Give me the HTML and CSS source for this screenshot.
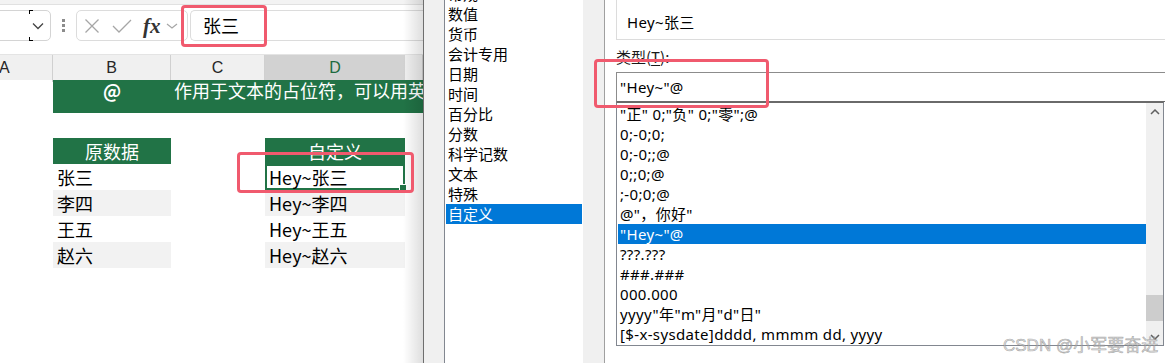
FILE: index.html
```html
<!DOCTYPE html>
<html>

<head>
    <title>设置单元格格式</title>
    <link rel="stylesheet" href="styles.css">
</head>

<body>
    <div id="screen">
        <div id="excel">
            <div class="top-strip"></div>
            <div class="formula-bar">
                <div class="name-box">
                    <span class="name-drop">
                        <svg width="12" height="8" viewBox="0 0 12 8"><path d="M1 1.5 L6 6.5 L11 1.5" fill="none" stroke="#444" stroke-width="1.3"/></svg>
                    </span>
                </div>
                <div class="grip"><i></i><i></i><i></i></div>
                <div class="fx-group">
                    <svg class="fx-icon" width="16" height="16" viewBox="0 0 16 16"><path d="M1.5 1.5 L14.5 14.5 M14.5 1.5 L1.5 14.5" stroke="#a6a6a6" stroke-width="1.3" fill="none"/></svg>
                    <svg class="fx-icon" width="20" height="14" viewBox="0 0 20 14"><path d="M1 7 L7 13 L19 1" stroke="#a6a6a6" stroke-width="1.3" fill="none"/></svg>
                    <span class="fx">fx</span>
                    <svg class="fx-drop" width="12" height="6" viewBox="0 0 12 6"><path d="M1 1 L6 5 L11 1" fill="none" stroke="#a6a6a6" stroke-width="1.2"/></svg>
                </div>
                <div class="formula-input">张三</div>
            </div>
            <div class="col-heads">
                <div class="col-head col-a">A</div>
                <div class="col-head">B</div>
                <div class="col-head">C</div>
                <div class="col-head selected">D</div>
                <div class="col-head"></div>
            </div>
            <div class="sheet">
                <div></div>
                <div class="banner"><span class="banner-at">@</span><span class="banner-text">作用于文本的占位符，可以用英文的双引号包裹内容</span></div>

                <div class="blank-row"></div>

                <div></div><div class="cell head">原数据</div><div></div><div class="cell head">自定义</div><div></div>
                <div></div><div class="cell">张三</div><div></div><div class="cell active">Hey~张三</div><div></div>
                <div></div><div class="cell band">李四</div><div></div><div class="cell band">Hey~李四</div><div></div>
                <div></div><div class="cell">王五</div><div></div><div class="cell">Hey~王五</div><div></div>
                <div></div><div class="cell band">赵六</div><div></div><div class="cell band">Hey~赵六</div><div></div>
            </div>
        </div>

        <div id="dialog">
            <div class="cat-panel">
                <ul class="cat-list">
                    <li>常规</li>
                    <li>数值</li>
                    <li>货币</li>
                    <li>会计专用</li>
                    <li>日期</li>
                    <li>时间</li>
                    <li>百分比</li>
                    <li>分数</li>
                    <li>科学记数</li>
                    <li>文本</li>
                    <li>特殊</li>
                    <li class="selected">自定义</li>
                </ul>
            </div>
            <div class="type-panel">
                <div class="sample">Hey~张三</div>
                <div class="type-label">类型(<u>T</u>):</div>
                <div class="type-input">"Hey~"@</div>
                <div class="type-list">
                    <ul class="type-items">
                        <li>"正" 0;"负" 0;"零";@</li>
                        <li>0;-0;0;</li>
                        <li>0;-0;;@</li>
                        <li>0;;0;@</li>
                        <li>;-0;0;@</li>
                        <li>@"，你好"</li>
                        <li class="selected">"Hey~"@</li>
                        <li>???.???</li>
                        <li>###.###</li>
                        <li>000.000</li>
                        <li>yyyy"年"m"月"d"日"</li>
                        <li>[$-x-sysdate]dddd, mmmm dd, yyyy</li>
                    </ul>
                    <div class="scrollbar">
                        <span class="arrow">
                            <svg width="10" height="6" viewBox="0 0 10 6"><path d="M1 5 L5 1 L9 5" fill="none" stroke="#606060" stroke-width="1.5"/></svg>
                        </span>
                        <span class="track"><span class="thumb"></span></span>
                        <span class="arrow">
                            <svg width="10" height="6" viewBox="0 0 10 6"><path d="M1 1 L5 5 L9 1" fill="none" stroke="#606060" stroke-width="1.5"/></svg>
                        </span>
                    </div>
                </div>
            </div>
        </div>

        <div class="dialog-shadow"></div>
        <div class="mark mark-formula"></div>
        <div class="mark mark-cell"></div>
        <div class="mark mark-type"></div>
        <div class="watermark">CSDN @小军要奋进</div>
    </div>
</body>

</html>
```

FILE: styles.css
```css
* {
    box-sizing: border-box;
}

html, body {
    margin: 0;
    padding: 0;
    background: #fff;
}

#screen {
    position: relative;
    display: flex;
    width: 1165px;
    height: 363px;
    overflow: hidden;
}

ul {
    list-style: none;
    margin: 0;
    padding: 0;
}

/* ---------- excel side ---------- */

#excel {
    width: 423px;
    flex: none;
    overflow: hidden;
    font-family: "Noto Sans CJK SC", sans-serif;
    color: #000;
}

.top-strip {
    height: 5px;
    background: #f3f3f3;
    border-bottom: 1px solid #e1e1e1;
}

.formula-bar {
    display: flex;
    align-items: center;
    height: 49px;
    padding-bottom: 8px;
}

.name-box {
    width: 52px;
    height: 31px;
    margin-left: -1px;
    border: 1px solid #d4d4d4;
    border-radius: 0 5px 5px 0;
    background: #fff;
    display: flex;
    justify-content: flex-end;
}

.name-drop {
    position: relative;
    width: 21px;
    display: flex;
    align-items: center;
    justify-content: center;
    padding-right: 4px;
}

.name-drop::before,
.name-drop::after {
    content: "";
    position: absolute;
    left: 0;
    width: 3px;
    height: 3px;
    border-left: 1px solid #000;
}

.name-drop::before {
    top: -1px;
    border-top: 1px solid #000;
}

.name-drop::after {
    bottom: -1px;
    border-bottom: 1px solid #000;
}

.grip {
    display: flex;
    flex-direction: column;
    gap: 2px;
    margin: 0 11px 0 11px;
}

.grip i {
    display: block;
    width: 3px;
    height: 3px;
    background: #8c8c8c;
}

.fx-group {
    display: flex;
    align-items: center;
    width: 112px;
    height: 31px;
    border: 1px solid #dcdcdc;
    border-radius: 5px;
    padding-left: 7px;
}

.fx-icon {
    margin-right: 11px;
}

.fx-icon + .fx-icon {
    margin-right: 11px;
    margin-left: 1px;
}

.fx {
    font-family: "Liberation Serif", serif;
    font-style: italic;
    font-weight: bold;
    font-size: 21px;
    line-height: 20px;
    color: #333;
    margin-right: 5px;
}

.formula-input {
    flex: 1;
    height: 31px;
    margin-left: 2px;
    border: 1px solid #dcdcdc;
    border-right: none;
    border-radius: 5px 0 0 5px;
    padding-left: 12px;
    font-size: 18px;
    line-height: 28px;
}

.col-heads {
    display: grid;
    grid-template-columns: 53px 118px 94px 140px 1fr;
    height: 26px;
    background: #f0f0f0;
    border-top: 1px solid #e4e4e4;
}

.col-head {
    border-right: 1px solid #d0d0d0;
    font-family: "Liberation Sans", sans-serif;
    font-size: 16px;
    line-height: 25px;
    text-align: center;
    color: #262626;
}

.col-head.col-a {
    text-align: left;
    text-indent: -1px;
}

.col-head.selected {
    background: #d2d2d2;
    color: #1d6b3f;
    border-bottom: 2px solid #217346;
    border-right: none;
}

.sheet {
    display: grid;
    grid-template-columns: 53px 118px 94px 140px 1fr;
    grid-template-rows: 33px 25px 26px 26px 26px 26px 26px;
    font-size: 18px;
}

.banner {
    grid-column: span 4;
    display: flex;
    background: #217346;
    color: #fff;
    line-height: 21px;
    white-space: nowrap;
    overflow: hidden;
}

.banner-at {
    width: 118px;
    flex: none;
    text-align: center;
    font-weight: 600;
}

.banner-text {
    padding-left: 3px;
}

.blank-row {
    grid-column: 1 / -1;
}

.cell {
    position: relative;
    padding-left: 4px;
    line-height: 26px;
    white-space: nowrap;
}

.cell.head {
    background: #217346;
    color: #fff;
    text-align: center;
    padding-left: 0;
}

.cell.band {
    background: #f2f2f2;
}

.sheet .cell:nth-child(5n+4) {
    padding-left: 5px;
}

.sheet .cell.head:nth-child(5n+4) {
    padding-left: 0;
}

.cell.active {
    box-shadow: inset 0 0 0 2px #217346;
}

.cell.active::after {
    content: "";
    position: absolute;
    right: -2px;
    bottom: -1px;
    width: 6px;
    height: 5px;
    background: #217346;
    border: 1px solid #fff;
}

/* ---------- dialog side ---------- */

#dialog {
    flex: 1;
    display: flex;
    border-left: 1px solid #6e6e6e;
    font-family: "Noto Sans", "Noto Sans CJK SC", sans-serif;
    font-size: 15px;
    color: #000;
}

.cat-panel {
    width: 181px;
    flex: none;
    background: #f0f0f0;
    padding-left: 20px;
    border-right: 1px solid #a0a0a0;
}

.cat-list {
    width: 139px;
    height: 400px;
    margin-top: -16px;
    background: #fff;
    border-left: 1px solid #828790;
    padding-top: 0;
}

.cat-list li {
    height: 20px;
    line-height: 20px;
    padding-left: 3px;
    font-family: "Noto Sans CJK SC", sans-serif;
}

.cat-list li.selected {
    background: #0078d7;
    color: #fff;
    margin: 0 1px;
    padding-left: 2px;
}

.type-panel {
    flex: 1;
    background: #fff;
    padding-left: 11px;
    overflow: hidden;
    letter-spacing: 0.35px;
}

.sample {
    width: 600px;
    height: 40px;
    border: 1px solid #dcdcdc;
    border-top: none;
    padding: 12px 10px 0;
    line-height: 20px;
}

.type-label {
    margin-top: 7px;
    line-height: 20px;
    font-family: "Noto Sans CJK SC", sans-serif;
    font-size: 15px;
    letter-spacing: 0;
    color: #1a1a1a;
}

.type-label u {
    text-decoration-thickness: 1px;
    text-underline-offset: 2px;
}

.type-input {
    width: 600px;
    height: 30px;
    margin-top: 5px;
    border: 1px solid #8c8c8c;
    border-bottom-color: #6a6a6a;
    padding-left: 3px;
    line-height: 28px;
}

.type-list {
    display: flex;
    width: 548px;
    height: 244px;
    border: 1px solid #828790;
    border-top-color: #6a6a6a;
    overflow: hidden;
}

.type-items {
    flex: 1;
    padding-top: 1px;
}

.type-items li {
    height: 20px;
    line-height: 20px;
    padding-left: 3px;
    white-space: nowrap;
}

.type-items li.selected {
    background: #0078d7;
    color: #fff;
    margin: 0 0 0 1px;
    padding-left: 2px;
}

.scrollbar {
    width: 17px;
    flex: none;
    display: flex;
    flex-direction: column;
    background: #f0f0f0;
}

.arrow {
    height: 17px;
    flex: none;
    display: flex;
    align-items: center;
    justify-content: center;
}

.track {
    flex: 1;
}

.thumb {
    display: block;
    height: 26px;
    margin-top: 175px;
    background: #cdcdcd;
}

/* ---------- overlays ---------- */

.dialog-shadow {
    position: absolute;
    left: 403px;
    top: 0;
    width: 20px;
    height: 363px;
    background: linear-gradient(to right, rgba(0, 0, 0, 0), rgba(0, 0, 0, 0.13));
}

.mark {
    position: absolute;
    border: 3px solid #f05a6e;
    border-radius: 4px;
}

.mark-formula {
    left: 181px;
    top: 5px;
    width: 86px;
    height: 42px;
}

.mark-cell {
    left: 237px;
    top: 152px;
    width: 177px;
    height: 41px;
}

.mark-type {
    left: 594px;
    top: 59px;
    width: 175px;
    height: 49px;
}

.watermark {
    position: absolute;
    left: 1003px;
    top: 334px;
    font-family: "Liberation Sans", "Noto Sans CJK SC", sans-serif;
    font-size: 17px;
    line-height: 24px;
    color: rgba(200, 200, 200, 0.55);
    -webkit-text-stroke: 0.6px rgba(120, 120, 120, 0.6);
    white-space: nowrap;
}
```
